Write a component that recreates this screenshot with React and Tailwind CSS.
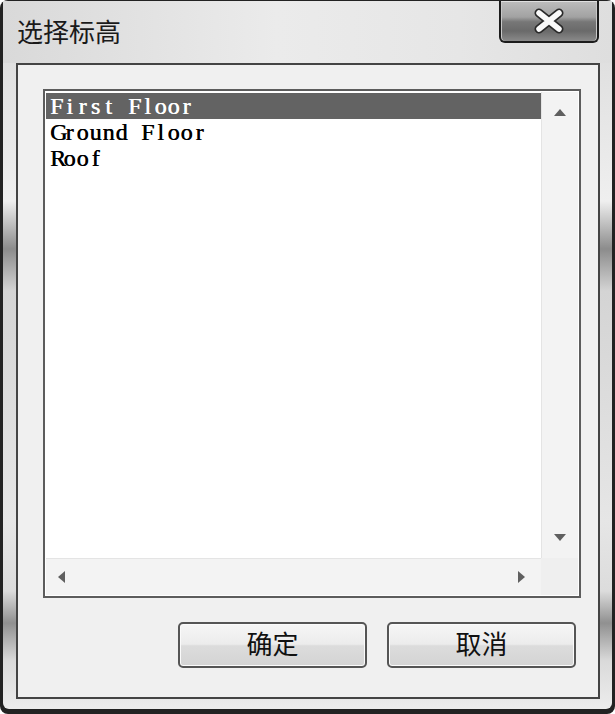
import React from "react";

const rows = ["First Floor", "Ground Floor", "Roof"];

// small grey scroll arrow
const Arrow = ({ dir }) => {
  const pts = {
    up: "0,7 6,0 12,7",
    down: "0,0 12,0 6,7",
    left: "7,0 7,12 0,6",
    right: "0,0 0,12 7,6",
  }[dir];
  const vertical = dir === "up" || dir === "down";
  return (
    <svg width={vertical ? 12 : 7} height={vertical ? 7 : 12} viewBox={vertical ? "0 0 12 7" : "0 0 7 12"}>
      <polygon points={pts} fill="#5f5f5f" />
    </svg>
  );
};

// fixed-width cells so the serif face reads like the old monospaced list font
const MonoText = ({ text }) => (
  <span className="flex">
    {text.split("").map((ch, i) => (
      <span key={i} className="inline-block w-[13px] text-center">
        {ch === " " ? "\u00a0" : ch}
      </span>
    ))}
  </span>
);

const CloseButton = () => (
  <div className="flex h-[42px] w-[100px] items-center justify-center rounded-b-[6px] border-x-2 border-b-2 border-[#1c1c1c] bg-[linear-gradient(to_bottom,#bdbdbd_0%,#a2a2a2_40%,#777_52%,#6a6a6a_75%,#8a8a8a_100%)] shadow-[inset_0_1px_0_#e0e0e0,inset_1px_0_0_#c8c8c8,inset_-1px_0_0_#c8c8c8]">
    <svg width="36" height="26" viewBox="0 0 36 26">
      <path d="M8 5 L28 21 M28 5 L8 21" stroke="#2a2a2a" strokeWidth="9" strokeLinecap="round" />
      <path d="M8 5 L28 21 M28 5 L8 21" stroke="#fafafa" strokeWidth="5.5" strokeLinecap="round" />
    </svg>
  </div>
);

const DialogButton = ({ label }) => (
  <button className="flex h-[46px] w-[189px] items-center justify-center rounded-[5px] border-2 border-[#555] bg-[linear-gradient(to_bottom,#f6f6f6_0%,#ececec_48%,#dcdcdc_52%,#d4d4d4_100%)] font-['Liberation_Sans','Noto_Sans_CJK_SC',sans-serif] text-[26px] leading-none text-[#111] shadow-[inset_0_0_0_1px_#fbfbfb]">
    {label}
  </button>
);

export default function App() {
  return (
    <div className="h-[714px] w-[615px] rounded-[8px] bg-[#222] px-[3px] pt-[1px] pb-[5px]">
      <div className="flex h-full flex-col rounded-[6px] bg-[linear-gradient(to_bottom,#e4e4e4_0px,#e0e0e0_62px,#efefef_200px,#8c8c8c_248px,#d4d4d4_290px,#e6e6e6_520px,#dcdcdc_590px,#909090_622px,#dadada_660px,#ededed_100%)] pl-[13px] pr-[12px] pb-[10px]">
        {/* title bar */}
        <div className="-ml-[13px] -mr-[12px] flex h-[62px] items-start justify-between bg-[linear-gradient(to_right,#d9d9d9_0%,#ebebeb_45%,#e6e6e6_75%,#dedede_100%)] pl-[14px] pr-[13px]">
          <div className="mt-[19px] font-['Liberation_Sans','Noto_Sans_CJK_SC',sans-serif] text-[26px] leading-none text-[#1a1a1a]">
            选择标高
          </div>
          <CloseButton />
        </div>

        {/* client area */}
        <div className="flex flex-1 flex-col border-2 border-[#444] bg-[#f0f0f0] pl-[25px] pr-[17px] pt-[24px]">
          <div className="h-[509px] border-2 border-[#5c5c5c] bg-white p-[1px]">
            <div className="grid h-full grid-cols-[1fr_37px] grid-rows-[1fr_37px]">
              <div className="flex flex-col pt-[1px] font-['Liberation_Serif',serif] text-[24px] leading-[26px] [text-shadow:0.5px_0_0_currentColor]">
                {rows.map((row, i) => (
                  <div
                    key={row}
                    className={
                      i === 0
                        ? "h-[26px] bg-[#636363] pl-[4px] text-white"
                        : "h-[26px] pl-[4px] text-black"
                    }
                  >
                    <MonoText text={row} />
                  </div>
                ))}
              </div>

              {/* vertical scrollbar */}
              <div className="flex flex-col items-center justify-between border-l border-[#e4e4e4] bg-[#f3f3f3] py-[17px]">
                <Arrow dir="up" />
                <Arrow dir="down" />
              </div>

              {/* horizontal scrollbar */}
              <div className="flex items-center justify-between border-t border-[#e4e4e4] bg-[#f3f3f3] pl-[12px] pr-[16px]">
                <Arrow dir="left" />
                <Arrow dir="right" />
              </div>

              <div className="bg-[#efefef]" />
            </div>
          </div>

          <div className="mt-[24px] flex justify-end gap-[20px] pr-[5px]">
            <DialogButton label="确定" />
            <DialogButton label="取消" />
          </div>
        </div>
      </div>
    </div>
  );
}
